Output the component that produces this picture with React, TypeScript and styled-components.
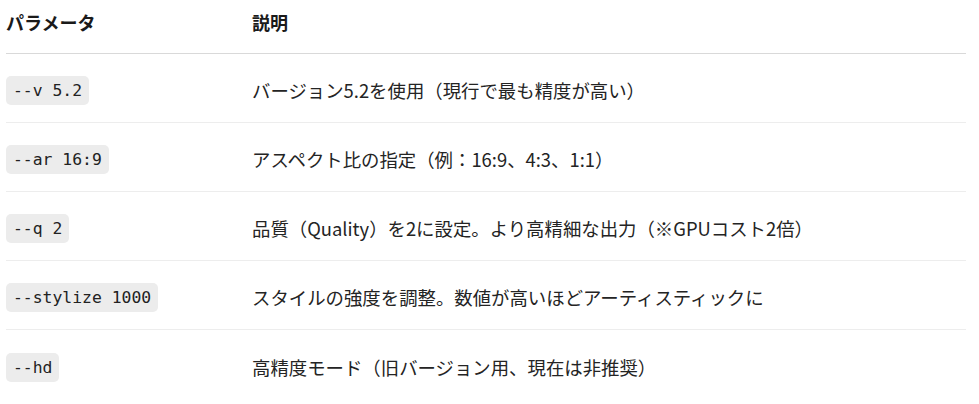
import styled, { createGlobalStyle } from 'styled-components';

const GlobalStyle = createGlobalStyle`
  html, body {
    margin: 0;
    padding: 0;
    background: #ffffff;
  }
  body {
    font-family: "Noto Sans CJK JP", "Noto Sans", sans-serif;
    color: #1f1f1f;
  }
`;

const Page = styled.div`
  padding: 0 13px 0 6px;
`;

const Table = styled.div`
  display: flex;
  flex-direction: column;
`;

const Row = styled.div<{ $head?: boolean }>`
  display: grid;
  grid-template-columns: 246px 1fr;
  align-items: center;
  height: ${(p) => (p.$head ? '54px' : '69px')};
  padding-bottom: ${(p) => (p.$head ? '10px' : '0')};
  box-sizing: border-box;
  border-bottom: 1px solid ${(p) => (p.$head ? '#d9d9d9' : '#ededed')};
  &:last-child {
    border-bottom: none;
  }
`;

const HeadCell = styled.div`
  font-size: 18px;
  font-weight: 700;
  color: #1a1a1a;
  line-height: 26px;
`;

const Cell = styled.div`
  font-size: 18.4px;
  line-height: 26px;
  color: #242424;
  padding-top: 4px;
`;

const Code = styled.code`
  display: inline-block;
  font-family: "DejaVu Sans Mono", "Liberation Mono", monospace;
  font-size: 16.4px;
  line-height: 19px;
  padding: 5px 7px 5px 7px;
  background: #ececec;
  border-radius: 5px;
  color: #222222;
`;

const params = [
  { code: '--v 5.2', desc: 'バージョン5.2を使用（現行で最も精度が高い）' },
  { code: '--ar 16:9', desc: 'アスペクト比の指定（例：16:9、4:3、1:1）' },
  { code: '--q 2', desc: '品質（Quality）を2に設定。より高精細な出力（※GPUコスト2倍）' },
  { code: '--stylize 1000', desc: 'スタイルの強度を調整。数値が高いほどアーティスティックに' },
  { code: '--hd', desc: '高精度モード（旧バージョン用、現在は非推奨）' },
];

export default function App() {
  return (
    <Page>
      <GlobalStyle />
      <Table>
        <Row $head>
          <HeadCell>パラメータ</HeadCell>
          <HeadCell>説明</HeadCell>
        </Row>
        {params.map((item) => (
          <Row key={item.code}>
            <Cell>
              <Code>{item.code}</Code>
            </Cell>
            <Cell>{item.desc}</Cell>
          </Row>
        ))}
      </Table>
    </Page>
  );
}
